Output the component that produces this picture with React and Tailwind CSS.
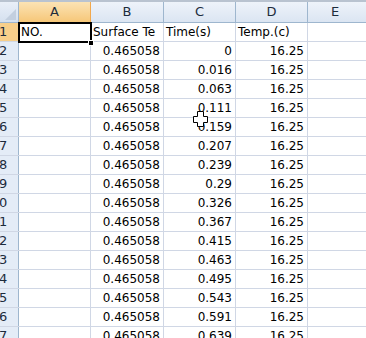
const times = ["0", "0.016", "0.063", "0.111", "0.159", "0.207", "0.239", "0.29", "0.326", "0.367", "0.415", "0.463", "0.495", "0.543", "0.591", "0.639"];

const cols = [
  { key: "A", w: "w-[72px]" },
  { key: "B", w: "w-[73px]" },
  { key: "C", w: "w-[72px]" },
  { key: "D", w: "w-[72px]" },
];

function Cursor() {
  return (
    <svg className="absolute left-[193px] top-[111px]" width="15" height="16" viewBox="0 0 15 16">
      <path d="M4.5 0.5h6v5h4v6h-4v4h-6v-4h-4v-6h4z" fill="#fff" stroke="#000" strokeWidth="1" />
    </svg>
  );
}

export default function App() {
  const rows = [];
  rows.push(["NO.", "Surface Te", "Time(s)", "Temp.(c)"]);
  times.forEach((t) => rows.push(["", "0.465058", t, "16.25"]));

  return (
    <div className="relative w-[366px] h-[338px] overflow-hidden bg-white text-black" style={{ fontFamily: '"DejaVu Sans", Verdana, sans-serif' }}>
      <div className="h-[2px] bg-[#b9c3d0]" />
      {/* column headers */}
      <div className="flex h-[21px] border-b border-[#9eb6ce]">
        <div className="relative w-[19px] shrink-0 border-r border-[#9eb6ce] bg-gradient-to-b from-[#e9eff8] to-[#d5e0ef]">
          <div className="absolute right-[2px] bottom-[2px] w-0 h-0 border-l-[11px] border-l-transparent border-b-[11px] border-b-[#c3cfdf]" />
        </div>
        {cols.map((c) => (
          <div
            key={c.key}
            className={`${c.w} shrink-0 flex items-center justify-center border-r text-[13px] ${c.key === "A" ? "bg-gradient-to-b from-[#fbe3b4] to-[#f6c778] border-[#f2a84c] text-[#1c2b3c]" : "bg-gradient-to-b from-[#eef3fa] to-[#dbe5f2] border-[#9eb6ce] text-[#1c2b3c]"}`}
          >
            {c.key}
          </div>
        ))}
        <div className="flex-1 flex items-center justify-center text-[13px] text-[#1c2b3c] bg-gradient-to-b from-[#eef3fa] to-[#dbe5f2]">
          <span className="pr-[4px]">E</span>
        </div>
      </div>
      {/* rows */}
      {rows.map((r, i) => (
        <div key={i} className="flex h-[19px] border-b border-[#d0d7e5] text-[12px] leading-[18px]">
          <div className={`w-[19px] shrink-0 overflow-hidden border-r text-[13px] ${i === 0 ? "bg-[#f8cf8a] border-[#f2a84c]" : "bg-[#e4ecf7] border-[#9eb6ce]"}`}>
            <div className="-ml-[1px] text-[#1c2b3c]">{String(i + 1).slice(-1)}</div>
          </div>
          {r.map((v, j) => (
            <div
              key={j}
              className={`${cols[j].w} shrink-0 border-r border-[#d0d7e5] overflow-hidden whitespace-nowrap ${i === 0 ? "text-left pl-[2px]" : "text-right pr-[3px]"}`}
            >
              {v}
            </div>
          ))}
          <div className="flex-1" />
        </div>
      ))}
      {/* active cell */}
      <div className="absolute left-[18px] top-[22px] w-[74px] h-[21px] border-2 border-black" />
      <div className="absolute left-[88px] top-[40px] w-[6px] h-[6px] bg-black border border-white" />
      <Cursor />
    </div>
  );
}
